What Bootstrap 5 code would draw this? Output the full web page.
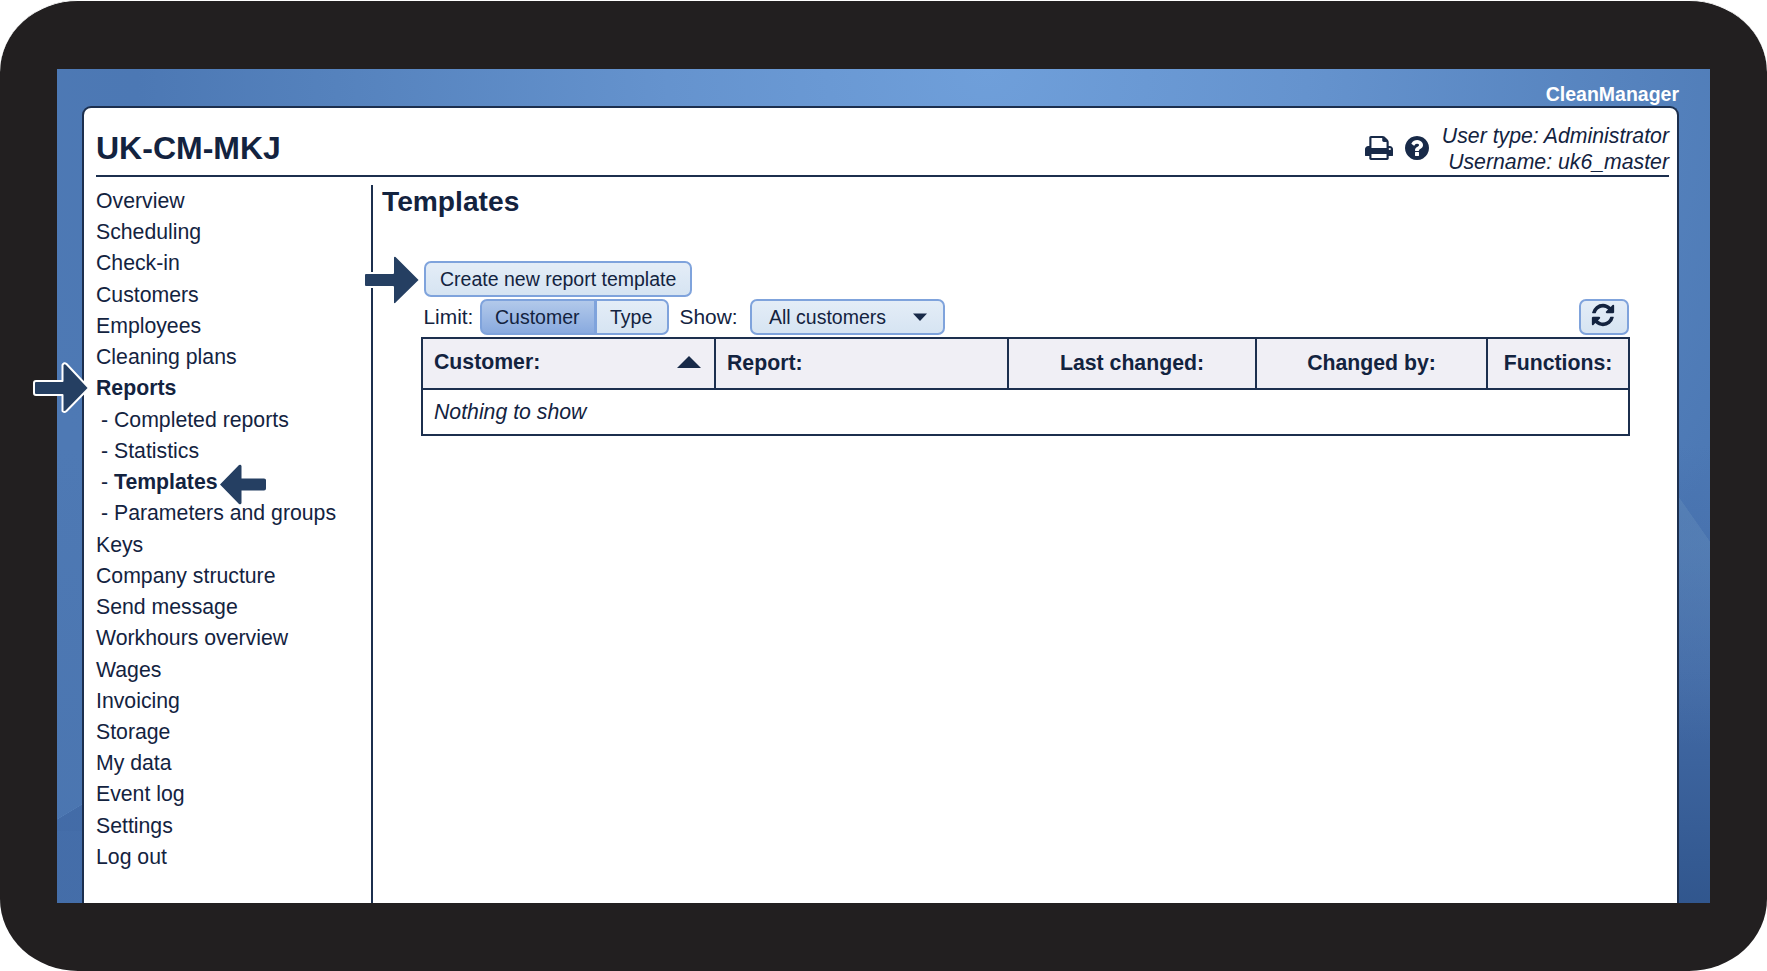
<!DOCTYPE html>
<html lang="en">
<head>
<meta charset="utf-8">
<meta name="viewport" content="width=device-width, initial-scale=1">
<title>CleanManager - Templates</title>
<link href="https://cdn.jsdelivr.net/npm/bootstrap@5.3.0/dist/css/bootstrap.min.css" rel="stylesheet">
<style>
  :root { --ink: #13233f; --line: #1c2f4e; --arrow: #253f62; }
  body { font-family: "Liberation Sans", Arial, sans-serif; font-size: 21.25px; line-height: 31.23px; color: var(--ink); background: #fff; }
  a { color: inherit; text-decoration: none; }
  .device { height: 971px; padding: 68px 57px 0; border: solid #fff; border-width: 1px 0 0; border-radius: 78px / 72px; background: #221f20; }
  .screen { height: 834px; padding: 0 31px 0 25px; background:
      linear-gradient(149deg, transparent 50%, #6590c455 51%, #3c639f88 52%) 0 722px / 26px 40px no-repeat,
      linear-gradient(#3f67a388, #3f67a388) 0 762px / 26px 72px no-repeat,
      linear-gradient(55deg, #6a92bd55 50%, transparent 51%) 100% 426px / 31px 50px no-repeat,
      linear-gradient(180deg, #6a92bd55, transparent) 100% 476px / 31px 200px no-repeat,
      linear-gradient(180deg, transparent 45%, #3a5f9c88 72%, #2f548bee) 100% 0 / 31px 100% no-repeat,
      linear-gradient(180deg, transparent 45%, #456fa966) 0 0 / 26px 100% no-repeat,
      radial-gradient(ellipse 1000px 900px at 930px 0, #6f9fda 0, #6593ce 32%, #5582bd 65%, #4c78b4 85%, #4e79b4 100%); }
  .brand { height: 37px; padding-top: 10px; font-size: 19.5px; color: #fff; }
  .panel { height: 797px; border: 2px solid var(--line); border-bottom: 0; border-radius: 9px 9px 0 0; background: #fff; padding: 0 8px 0 12px; }
  .topbar { height: 69px; border-bottom: 2px solid var(--line); }
  .company { font-size: 32px; margin-top: 13px; margin-bottom: 0; }
  .who { line-height: 26px; margin-top: 15px; margin-left: 13px; }
  .tool { margin-top: 12px; }
  .side { width: 277px; margin-top: 8px; border-right: 2px solid var(--line); height: 718px; }
  .side ul { padding-top: 1px; }
  .sub-item { padding-left: 5px; }
  .arrow { position: absolute; overflow: visible; }
  .arrow path { fill: var(--arrow); stroke: #fff; stroke-width: 2; stroke-linejoin: round; }
  .arrow-reports { left: -63px; top: -11px; }
  .arrow-templates { left: 124px; top: -2px; }
  .arrow-templates path { stroke: none; }
  .arrow-create { left: -61px; top: -6px; }
  .work { min-width: 0; margin-top: 8px; padding-left: 9px; padding-right: 40px; }
  .title { font-size: 28.2px; line-height: 32px; margin: 0 0 44px; }
  .ctl { height: 36px; padding: 0 14px; font-size: 19.5px; line-height: 30px; color: var(--ink); background: linear-gradient(#e4edf7, #d6e4f2); border: 2px solid #7fa3dc; border-radius: 7px; display: inline-flex; align-items: center; }
  .ctl.chosen { background: linear-gradient(#b2c9ea, #89aadf); color: var(--ink); border-color: #7fa3dc; }
  .tools { margin-left: 42px; margin-right: 0; }
  .filters { margin-top: 2px; }
  .limit-label { width: 56px; font-size: 20.9px; margin-left: -.5px; }
  .limit-set .ctl:first-child { width: 116px; padding: 0 0 0 13.5px; }
  .limit-set .ctl:last-child { width: 74px; padding: 0 0 0 13.5px; }
  .show-label { width: 81.5px; padding-left: 11px; font-size: 20.9px; }
  .picker { width: 195px; padding: 0 16px 0 17px; }
  .reload { width: 50px; padding: 0 2px 4px 0; }
  .grid-list { width: 1209px; margin: 2px 0 0 39px; table-layout: fixed; border-collapse: collapse; }
  .grid-list th, .grid-list td { border: 2px solid var(--line); padding: 1px 11px 0; vertical-align: middle; }
  .grid-list th { background: #f0eff5; height: 51px; }
  .grid-list td { height: 46px; }
  .sorter { margin-top: -3px; padding-right: 2px; }
</style>
</head>
<body>
<div class="device">
  <div class="screen">
    <div class="brand text-end fw-bold">CleanManager</div>
    <div class="panel">
      <header class="topbar d-flex align-items-start">
        <h1 class="company fw-bold me-auto align-self-center">UK-CM-MKJ</h1>
        <div class="d-flex align-self-center tool">
          <svg width="28" height="28" viewBox="0 0 1664 1792" preserveAspectRatio="none" fill="#182a48"><path d="M384 1536h896v-256h-896v256zM384 896h896v-384h-160q-40 0-68-28t-28-68v-160h-640v640zM1536 960q0-26-19-45t-45-19-45 19-19 45 19 45 45 19 45-19 19-45zM1664 960v416q0 13-9.5 22.5t-22.5 9.5h-224v160q0 40-28 68t-68 28h-960q-40 0-68-28t-28-68v-160h-224q-13 0-22.5-9.5t-9.5-22.5v-416q0-79 56.5-135.5t135.5-56.5h64v-544q0-40 28-68t68-28h672q40 0 88 20t76 48l152 152q28 28 48 76t20 88v256h64q79 0 135.5 56.5t56.5 135.5z"/></svg>
          <svg class="ms-2 ps-1" width="28" height="28" viewBox="0 0 1536 1792" fill="#182a48"><path d="M896 1376v-192q0-14-9-23t-23-9h-192q-14 0-23 9t-9 23v192q0 14 9 23t23 9h192q14 0 23-9t9-23zm256-672q0-88-55.5-163t-138.5-116-170-41q-243 0-371 213-15 24 8 42l132 100q7 6 19 6 16 0 25-12 53-68 86-92 34-24 86-24 48 0 85.5 26t37.5 59q0 38-20 61t-68 45q-63 28-115.5 86.5t-52.5 125.5v36q0 14 9 23t23 9h192q14 0 23-9t9-23q0-19 21.5-49.5t54.5-49.5q32-18 49-28.5t46-35 44.5-48 28-60.5 12.5-81zm384 192q0 209-103 385.5t-279.5 279.5-385.5 103-385.5-103-279.5-279.5-103-385.5 103-385.5 279.5-279.5 385.5-103 385.5 103 279.5 279.5 103 385.5z"/></svg>
        </div>
        <div class="who text-end fst-italic align-self-center">User type: Administrator<br>Username: uk6_master</div>
      </header>
      <div class="d-flex">
        <nav class="side flex-shrink-0">
          <ul class="list-unstyled mb-0">
            <li><a href="#">Overview</a></li>
            <li><a href="#">Scheduling</a></li>
            <li><a href="#">Check-in</a></li>
            <li><a href="#">Customers</a></li>
            <li><a href="#">Employees</a></li>
            <li><a href="#">Cleaning plans</a></li>
            <li class="position-relative"><a href="#" class="fw-bold">Reports</a>
              <svg class="arrow arrow-reports" width="56" height="52"><path d="M3 19H29.500V3Q31 0 33.500 2L56 26L33.500 49Q31 51 29.500 49V33H3Q1 33 1 31V21Q1 19 3 19Z"/></svg></li>
            <li class="sub-item">- <a href="#">Completed reports</a></li>
            <li class="sub-item">- <a href="#">Statistics</a></li>
            <li class="sub-item position-relative">- <a href="#" class="fw-bold">Templates</a>
              <svg class="arrow arrow-templates" width="46" height="40"><path d="M0 19.500L19 0Q21 -1 21.500 1V13.500H44Q46 13.500 46 15V23.500Q46 25.500 44 25.500H21.500V38Q21 40 19 39Z"/></svg></li>
            <li class="sub-item">- <a href="#">Parameters and groups</a></li>
            <li><a href="#">Keys</a></li>
            <li><a href="#">Company structure</a></li>
            <li><a href="#">Send message</a></li>
            <li><a href="#">Workhours overview</a></li>
            <li><a href="#">Wages</a></li>
            <li><a href="#">Invoicing</a></li>
            <li><a href="#">Storage</a></li>
            <li><a href="#">My data</a></li>
            <li><a href="#">Event log</a></li>
            <li><a href="#">Settings</a></li>
            <li><a href="#">Log out</a></li>
          </ul>
        </nav>
        <main class="work flex-grow-1">
          <h2 class="title fw-bold">Templates</h2>
          <div class="tools d-flex position-relative">
            <button class="btn ctl" type="button">Create new report template</button>
            <svg class="arrow arrow-create" width="56" height="50"><path d="M3 18H30V2Q31 0 33 1L57 25L33 48.500Q31 50 30 48V32H3Q1 32 1 30V20Q1 18 3 18Z"/></svg>
          </div>
          <div class="tools filters d-flex align-items-center">
            <span class="limit-label flex-shrink-0">Limit:</span>
            <div class="btn-group limit-set">
              <button class="btn ctl chosen" type="button">Customer</button>
              <button class="btn ctl" type="button">Type</button>
            </div>
            <span class="show-label flex-shrink-0">Show:</span>
            <button class="btn ctl picker justify-content-between" type="button">All customers
              <svg width="14" height="8" viewBox="0 0 14 8"><path d="M0 .5h14L7 8z" fill="#182a48"/></svg></button>
            <button class="btn ctl ms-auto reload justify-content-center" type="button" aria-label="Refresh">
              <svg width="26" height="26" viewBox="0 0 1792 1792" fill="#13233f"><path d="M1639 1056q0 5-1 7-64 268-268 434.500t-478 166.500q-146 0-282.500-55t-243.500-157l-129 129q-19 19-45 19t-45-19-19-45v-448q0-26 19-45t45-19h448q26 0 45 19t19 45-19 45l-137 137q71 66 161 102t187 36q134 0 250-65t186-179q11-17 53-117 8-23 30-23h192q13 0 22.500 9.500t9.500 22.500zm25-800v448q0 26-19 45t-45 19h-448q-26 0-45-19t-19-45 19-45l138-138q-148-137-349-137-134 0-250 65t-186 179q-11 17-53 117-8 23-30 23h-199q-13 0-22.500-9.500t-9.500-22.500v-7q65-268 270-434.500t480-166.500q146 0 284 55.500t245 156.500l130-129q19-19 45-19t45 19 19 45z"/></svg></button>
          </div>
          <table class="grid-list">
            <colgroup><col style="width:293px"><col style="width:293px"><col style="width:248px"><col style="width:231px"><col></colgroup>
            <thead><tr>
              <th><div class="d-flex justify-content-between align-items-center sorter">Customer:
                <svg width="24" height="12" viewBox="0 0 24 12"><path d="M0 12L12 0l12 12z" fill="#182a48"/></svg></div></th>
              <th>Report:</th>
              <th class="text-center">Last changed:</th>
              <th class="text-center">Changed by:</th>
              <th class="text-center px-0">Functions:</th>
            </tr></thead>
            <tbody><tr><td colspan="5" class="fst-italic">Nothing to show</td></tr></tbody>
          </table>
        </main>
      </div>
    </div>
  </div>
</div>
<script src="https://cdn.jsdelivr.net/npm/bootstrap@5.3.0/dist/js/bootstrap.bundle.min.js"></script>
</body>
</html>
